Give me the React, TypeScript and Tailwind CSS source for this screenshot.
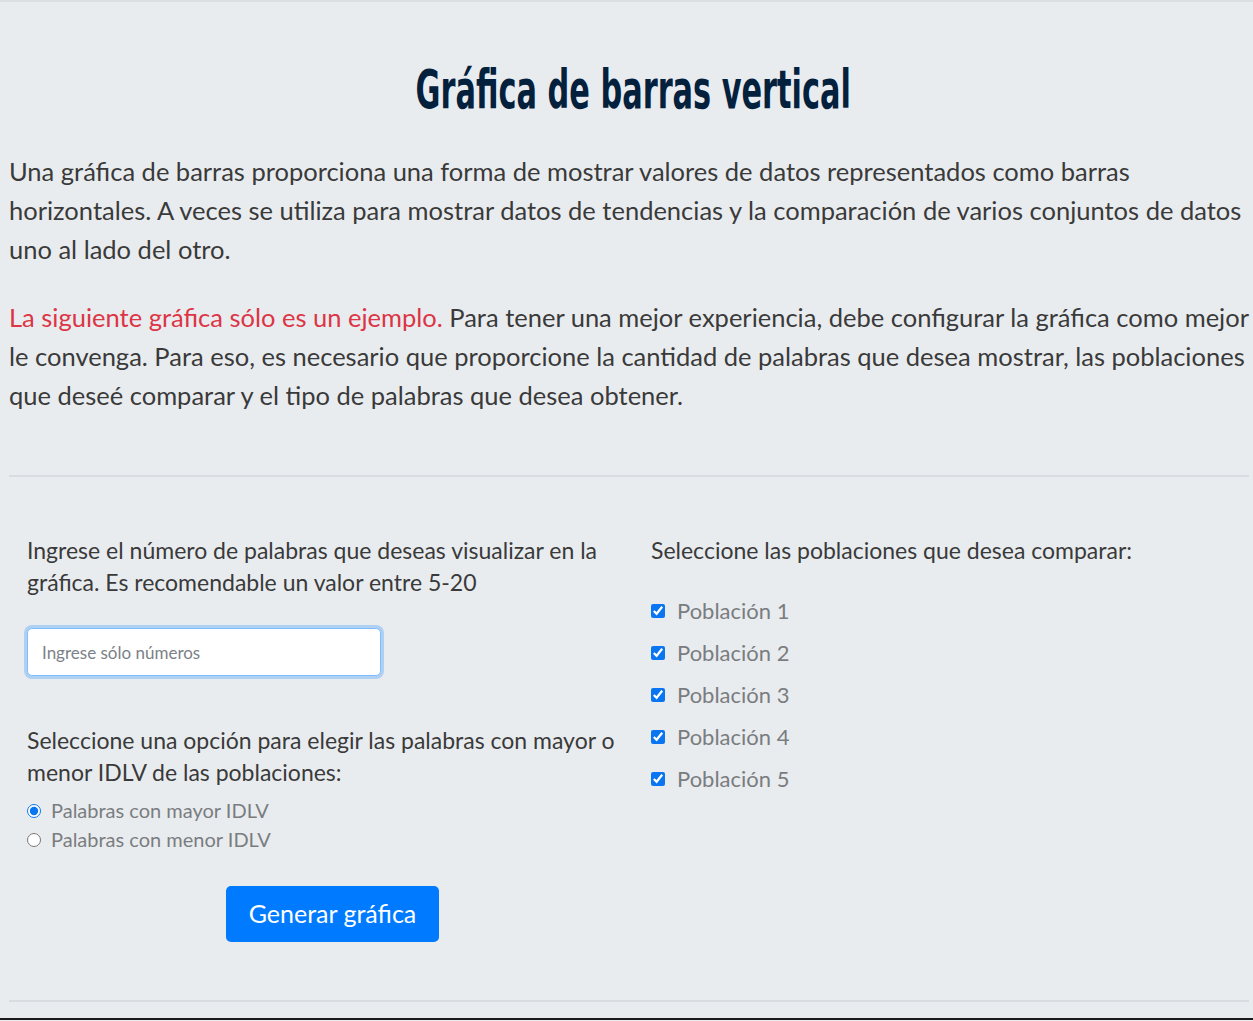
import React from "react";

const body = { fontFamily: "Lato, 'Noto Sans', sans-serif" };

export default function App() {
  const pobl = [1, 2, 3, 4, 5];
  return (
    <div className="min-h-[1021px] bg-[#e9ecef] border-t-2 border-[#dddfe1] text-[#3a3a3a] overflow-hidden" style={body}>
      <div className="pl-[9px] pr-[4px]">
        <div className="pt-[53px] pb-[27px] pl-[9px] text-center">
          <h1
            className="inline-block text-[54px] leading-[70px] font-bold text-[#03203d] scale-x-[0.625]"
            style={{ fontFamily: "'Liberation Sans Narrow', 'DejaVu Sans Condensed', sans-serif" }}
          >
            Gráfica de barras vertical
          </h1>
        </div>
        <p className="text-[25.5px] leading-[39px]">
          <span className="block whitespace-nowrap">
            Una gráfica de barras proporciona una forma de mostrar valores de datos representados como barras
          </span>
          <span className="block whitespace-nowrap">
            horizontales. A veces se utiliza para mostrar datos de tendencias y la comparación de varios conjuntos de datos
          </span>
          <span className="block whitespace-nowrap">uno al lado del otro.</span>
        </p>
        <p className="text-[25.5px] leading-[39px] mt-[29px]">
          <span className="block whitespace-nowrap">
            <span className="text-[#dc3545]">La siguiente gráfica sólo es un ejemplo.</span> Para tener una mejor
            experiencia, debe configurar la gráfica como mejor
          </span>
          <span className="block whitespace-nowrap">
            le convenga. Para eso, es necesario que proporcione la cantidad de palabras que desea mostrar, las poblaciones
          </span>
          <span className="block whitespace-nowrap">que deseé comparar y el tipo de palabras que desea obtener.</span>
        </p>
        <hr className="mt-[60px] border-t-2 border-[#d8dbdf]" />
        <div className="grid grid-cols-[629px_1fr] pt-[57px] pb-[58px]">
          <div className="pl-[18px]">
            <p className="text-[23px] leading-[32px]">
              Ingrese el número de palabras que deseas visualizar en la gráfica. Es recomendable un valor entre 5-20
            </p>
            <input
              type="text"
              placeholder="Ingrese sólo números"
              className="mt-[30px] w-[354px] h-[48px] bg-white rounded-[5px] border border-[#80bdff] shadow-[0_0_0_3px_rgba(0,123,255,0.25)] px-[14px] text-[17px] text-[#495057] placeholder:text-[#7b8187] outline-none"
            />
            <p className="text-[23px] leading-[32px] mt-[48px]">
              Seleccione una opción para elegir las palabras con mayor o menor IDLV de las poblaciones:
            </p>
            <div className="mt-[8px] flex flex-col">
              <label className="flex items-center gap-[10px] text-[20px] leading-[29px] text-[#7a7d80]">
                <input type="radio" name="idlv" defaultChecked className="w-[14px] h-[14px] accent-[#0a75f0]" />
                Palabras con mayor IDLV
              </label>
              <label className="flex items-center gap-[10px] text-[20px] leading-[29px] text-[#7a7d80]">
                <input type="radio" name="idlv" className="w-[14px] h-[14px] accent-[#0a75f0]" />
                Palabras con menor IDLV
              </label>
            </div>
            <div className="flex justify-center mt-[32px]">
              <button className="bg-[#007bff] text-white text-[25px] rounded-[5px] w-[213px] h-[56px]">
                Generar gráfica
              </button>
            </div>
          </div>
          <div className="pl-[13px]">
            <p className="text-[23px] leading-[32px]">Seleccione las poblaciones que desea comparar:</p>
            <div className="mt-[29px] flex flex-col gap-[10px]">
              {pobl.map((n) => (
                <label key={n} className="flex items-center gap-[12px] text-[22px] leading-[32px] text-[#7a7d80]">
                  <input type="checkbox" defaultChecked className="w-[14px] h-[14px] accent-[#0a75f0]" />
                  Población {n}
                </label>
              ))}
            </div>
          </div>
        </div>
        <hr className="border-t-2 border-[#d8dbdf]" />
      </div>
      <div className="mt-[16px] h-[2px] bg-[#1b1b1b]" />
    </div>
  );
}
